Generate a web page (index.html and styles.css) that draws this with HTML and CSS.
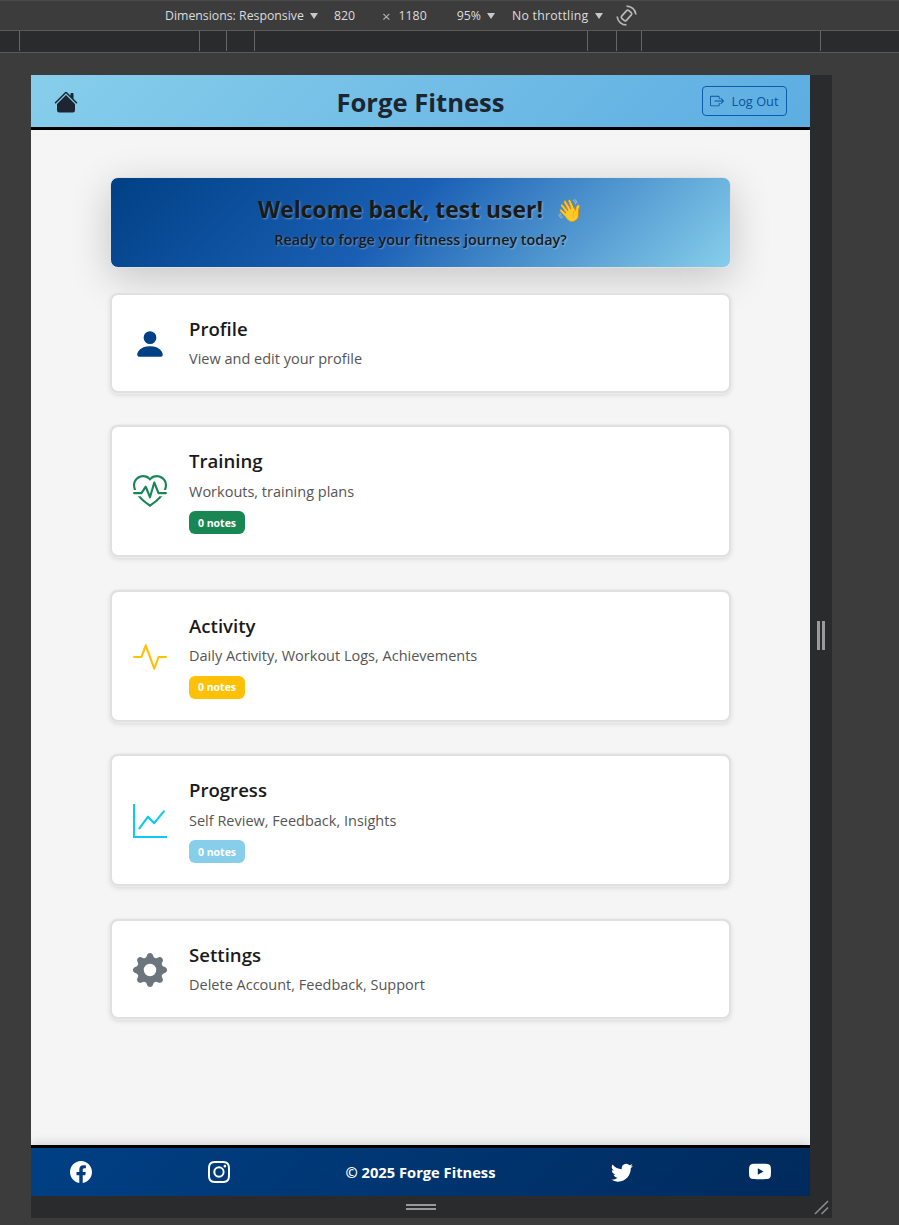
FILE: index.html
```html
<!DOCTYPE html>
<html lang="en">
<head>
<meta charset="utf-8">
<title>Forge Fitness</title>
<link rel="stylesheet" href="styles.css">
</head>
<body>
<div class="toolbar">
  <span class="tb-dim">Dimensions: Responsive</span><span class="caret"></span>
  <span class="tb-w">820</span><span class="tb-x">×</span><span class="tb-h">1180</span>
  <span class="tb-zoom">95%</span><span class="caret"></span>
  <span class="tb-thr">No throttling</span><span class="caret"></span>
  <svg class="tb-rot" viewBox="0 0 20 20" fill="none" stroke="#b8b8b8" stroke-width="1.6"><g transform="rotate(42 10 10)"><rect x="7" y="5" width="6" height="10" rx="1.5"/><path d="M4 3.3A9 9 0 0 1 16 3.3M16 16.7A9 9 0 0 1 4 16.7"/></g></svg>
</div>
<div class="ruler">
  <i class="r r1"></i><i class="r r2"></i><i class="r r3"></i><i class="r r4"></i><i class="r r5"></i><i class="r r6"></i><i class="r r7"></i><i class="r r8"></i>
</div>
<div class="device">
  <div class="viewport">
    <header class="head">
      <svg class="home" viewBox="0 0 16 16" fill="#1c2530"><path d="M8.707 1.5a1 1 0 0 0-1.414 0L.646 8.146a.5.5 0 0 0 .708.708L8 2.207l6.646 6.647a.5.5 0 0 0 .708-.708L13 5.793V2.5a.5.5 0 0 0-.5-.5h-1a.5.5 0 0 0-.5.5v1.293L8.707 1.5Z"/><path d="m8 3.293 6 6V13.5a1.5 1.5 0 0 1-1.5 1.5h-9A1.5 1.5 0 0 1 2 13.5V9.293l6-6Z"/></svg>
      <h1 class="brand">Forge Fitness</h1>
      <button class="logout"><svg class="logout-ic" viewBox="0 0 16 16" fill="currentColor"><path d="M10 12.5a.5.5 0 0 1-.5.5h-8a.5.5 0 0 1-.5-.5v-9a.5.5 0 0 1 .5-.5h8a.5.5 0 0 1 .5.5v2a.5.5 0 0 0 1 0v-2A1.5 1.5 0 0 0 9.5 2h-8A1.5 1.5 0 0 0 0 3.5v9A1.5 1.5 0 0 0 1.5 14h8a1.5 1.5 0 0 0 1.5-1.5v-2a.5.5 0 0 0-1 0v2z"/><path d="M15.854 8.354a.5.5 0 0 0 0-.708l-3-3a.5.5 0 0 0-.708.708L14.293 7.5H5.5a.5.5 0 0 0 0 1h8.793l-2.147 2.146a.5.5 0 0 0 .708.708l3-3z"/></svg>Log Out</button>
    </header>
    <main class="main">
      <section class="hero">
        <h2 class="hero-title">Welcome back, test user! <span class="wave">👋</span></h2>
        <p class="hero-sub">Ready to forge your fitness journey today?</p>
      </section>
      <div class="cards">
        <a class="card">
          <svg class="ic ic-profile" viewBox="0 0 16 16" fill="currentColor"><path d="M3 14s-1 0-1-1 1-4 6-4 6 3 6 4-1 1-1 1H3Zm5-6a3 3 0 1 0 0-6 3 3 0 0 0 0 6Z"/></svg>
          <div class="body"><h3 class="title">Profile</h3><p class="desc">View and edit your profile</p></div>
        </a>
        <a class="card">
          <svg class="ic ic-training" viewBox="0 0 16 16" fill="currentColor"><path d="m8 2.748-.717-.737C5.6.281 2.514.878 1.4 3.053.918 3.995.78 5.323 1.508 7H.43c-2.128-5.697 4.165-8.83 7.394-5.857.06.055.119.112.176.171a3.12 3.12 0 0 1 .176-.17c3.23-2.974 9.522.159 7.394 5.856h-1.078c.728-1.677.59-3.005.108-3.947C13.486.878 10.4.28 8.717 2.01L8 2.748ZM2.212 10h1.315C4.593 11.183 6.05 12.458 8 13.795c1.949-1.337 3.407-2.612 4.473-3.795h1.315c-1.265 1.566-3.14 3.25-5.788 5-2.648-1.75-4.523-3.434-5.788-5Z"/><path d="M10.464 3.314a.5.5 0 0 0-.945.049L7.921 8.956 6.464 5.314a.5.5 0 0 0-.88-.091L3.732 8H.5a.5.5 0 0 0 0 1H4a.5.5 0 0 0 .416-.223l1.473-2.209 1.647 4.118a.5.5 0 0 0 .945-.049l1.598-5.593 1.457 3.642A.5.5 0 0 0 12 9h3.5a.5.5 0 0 0 0-1h-3.162l-1.874-4.686Z"/></svg>
          <div class="body"><h3 class="title">Training</h3><p class="desc">Workouts, training plans</p><span class="badge b-green">0 notes</span></div>
        </a>
        <a class="card">
          <svg class="ic ic-activity" viewBox="0 0 16 16" fill="currentColor"><path d="M6 2a.5.5 0 0 1 .47.33L10 12.036l1.53-4.208A.5.5 0 0 1 12 7.5h3.5a.5.5 0 0 1 0 1h-3.15l-1.88 5.17a.5.5 0 0 1-.94 0L6 3.964 4.47 8.171A.5.5 0 0 1 4 8.5H.5a.5.5 0 0 1 0-1h3.15l1.88-5.17A.5.5 0 0 1 6 2Z"/></svg>
          <div class="body"><h3 class="title">Activity</h3><p class="desc">Daily Activity, Workout Logs, Achievements</p><span class="badge b-yellow">0 notes</span></div>
        </a>
        <a class="card">
          <svg class="ic ic-progress" viewBox="0 0 16 16" fill="currentColor"><path d="M0 0h1v15h15v1H0V0Zm14.817 3.113a.5.5 0 0 1 .07.704l-4.5 5.5a.5.5 0 0 1-.74.037L7.06 6.767l-3.656 5.027a.5.5 0 0 1-.808-.588l4-5.5a.5.5 0 0 1 .758-.06l2.609 2.61 4.15-5.073a.5.5 0 0 1 .704-.07Z"/></svg>
          <div class="body"><h3 class="title">Progress</h3><p class="desc">Self Review, Feedback, Insights</p><span class="badge b-sky">0 notes</span></div>
        </a>
        <a class="card">
          <svg class="ic ic-settings" viewBox="0 0 16 16" fill="currentColor"><path d="M9.405 1.05c-.413-1.4-2.397-1.4-2.81 0l-.1.34a1.464 1.464 0 0 1-2.105.872l-.31-.17c-1.283-.698-2.686.705-1.987 1.987l.169.311c.446.82.023 1.841-.872 2.105l-.34.1c-1.4.413-1.4 2.397 0 2.81l.34.1a1.464 1.464 0 0 1 .872 2.105l-.17.31c-.698 1.283.705 2.686 1.987 1.987l.311-.169a1.464 1.464 0 0 1 2.105.872l.1.34c.413 1.4 2.397 1.4 2.81 0l.1-.34a1.464 1.464 0 0 1 2.105-.872l.31.17c1.283.698 2.686-.705 1.987-1.987l-.169-.311a1.464 1.464 0 0 1 .872-2.105l.34-.1c1.4-.413 1.4-2.397 0-2.81l-.34-.1a1.464 1.464 0 0 1-.872-2.105l.17-.31c.698-1.283-.705-2.686-1.987-1.987l-.311.169a1.464 1.464 0 0 1-2.105-.872l-.1-.34zM8 10.93a2.929 2.929 0 1 1 0-5.86 2.929 2.929 0 0 1 0 5.858z"/></svg>
          <div class="body"><h3 class="title">Settings</h3><p class="desc">Delete Account, Feedback, Support</p></div>
        </a>
      </div>
    </main>
    <footer class="foot">
      <svg class="soc" viewBox="0 0 16 16" fill="currentColor"><path d="M16 8.049c0-4.446-3.582-8.05-8-8.05C3.58 0-.002 3.603-.002 8.05c0 4.017 2.926 7.347 6.75 7.951v-5.625h-2.03V8.05H6.75V6.275c0-2.017 1.195-3.131 3.022-3.131.876 0 1.791.157 1.791.157v1.98h-1.009c-.993 0-1.303.621-1.303 1.258v1.51h2.218l-.354 2.326H9.25V16c3.824-.604 6.75-3.934 6.75-7.951z"/></svg>
      <svg class="soc" viewBox="0 0 16 16" fill="currentColor"><path d="M8 0C5.829 0 5.556.01 4.703.048 3.85.088 3.269.222 2.76.42a3.917 3.917 0 0 0-1.417.923A3.927 3.927 0 0 0 .42 2.76C.222 3.268.087 3.85.048 4.7.01 5.555 0 5.827 0 8.001c0 2.172.01 2.444.048 3.297.04.852.174 1.433.372 1.942.205.526.478.972.923 1.417.444.445.89.719 1.416.923.51.198 1.09.333 1.942.372C5.555 15.99 5.827 16 8 16s2.444-.01 3.298-.048c.851-.04 1.434-.174 1.943-.372a3.916 3.916 0 0 0 1.416-.923c.445-.445.718-.891.923-1.417.197-.509.332-1.09.372-1.942C15.99 10.445 16 10.173 16 8s-.01-2.445-.048-3.299c-.04-.851-.175-1.433-.372-1.941a3.926 3.926 0 0 0-.923-1.417A3.911 3.911 0 0 0 13.24.42c-.51-.198-1.092-.333-1.943-.372C10.443.01 10.172 0 7.998 0h.003zm-.717 1.442h.718c2.136 0 2.389.007 3.232.046.78.035 1.204.166 1.486.275.373.145.64.319.92.599.28.28.453.546.598.92.11.281.24.705.275 1.485.039.843.047 1.096.047 3.231s-.008 2.389-.047 3.232c-.035.78-.166 1.203-.275 1.485a2.47 2.47 0 0 1-.599.919c-.28.28-.546.453-.92.598-.28.11-.704.24-1.485.276-.843.038-1.096.047-3.232.047s-2.39-.009-3.233-.047c-.78-.036-1.203-.166-1.485-.276a2.478 2.478 0 0 1-.92-.598 2.48 2.48 0 0 1-.6-.92c-.109-.281-.24-.705-.275-1.485-.038-.843-.046-1.096-.046-3.233 0-2.136.008-2.388.046-3.231.036-.78.166-1.204.276-1.486.145-.373.319-.64.599-.92.28-.28.546-.453.92-.598.282-.11.705-.24 1.485-.276.738-.034 1.024-.044 2.515-.045v.002zm4.988 1.328a.96.96 0 1 0 0 1.92.96.96 0 0 0 0-1.92zm-4.27 1.122a4.109 4.109 0 1 0 0 8.217 4.109 4.109 0 0 0 0-8.217zm0 1.441a2.667 2.667 0 1 1 0 5.334 2.667 2.667 0 0 1 0-5.334z"/></svg>
      <span class="copy">© 2025 Forge Fitness</span>
      <svg class="soc" viewBox="0 0 16 16" fill="currentColor"><path d="M5.026 15c6.038 0 9.341-5.003 9.341-9.334 0-.14 0-.282-.006-.422A6.685 6.685 0 0 0 16 3.542a6.658 6.658 0 0 1-1.889.518 3.301 3.301 0 0 0 1.447-1.817 6.533 6.533 0 0 1-2.087.793A3.286 3.286 0 0 0 7.875 6.03a9.325 9.325 0 0 1-6.767-3.429 3.289 3.289 0 0 0 1.018 4.382A3.323 3.323 0 0 1 .64 6.575v.045a3.288 3.288 0 0 0 2.632 3.218 3.203 3.203 0 0 1-.865.115 3.23 3.23 0 0 1-.614-.057 3.283 3.283 0 0 0 3.067 2.277A6.588 6.588 0 0 1 .78 13.58a6.32 6.32 0 0 1-.78-.045A9.344 9.344 0 0 0 5.026 15z"/></svg>
      <svg class="soc" viewBox="0 0 16 16" fill="currentColor"><path d="M8.051 1.999h.089c.822.003 4.987.033 6.11.335a2.01 2.01 0 0 1 1.415 1.42c.101.38.172.883.22 1.402l.01.104.022.26.008.104c.065.914.073 1.77.074 1.957v.075c-.001.194-.01 1.108-.082 2.06l-.008.105-.009.104c-.05.572-.124 1.14-.235 1.558a2.007 2.007 0 0 1-1.415 1.42c-1.16.312-5.569.334-6.18.335h-.142c-.309 0-1.587-.006-2.927-.052l-.17-.006-.087-.004-.171-.007-.171-.007c-1.11-.049-2.167-.128-2.654-.26a2.007 2.007 0 0 1-1.415-1.419c-.111-.417-.185-.986-.235-1.558L.09 9.82l-.008-.104A31.4 31.4 0 0 1 0 7.68v-.123c.002-.215.01-.958.064-1.778l.007-.103.003-.052.008-.104.022-.26.01-.104c.048-.519.119-1.023.22-1.402a2.007 2.007 0 0 1 1.415-1.42c.487-.13 1.544-.21 2.654-.26l.17-.007.172-.006.086-.003.171-.007A99.788 99.788 0 0 1 7.858 2h.193zM6.4 5.209v4.818l4.157-2.408L6.4 5.209z"/></svg>
    </footer>
  </div>
  <div class="handle-right"><i></i><i></i></div>
  <div class="handle-bottom"><i></i><i></i></div>
  <div class="handle-corner"><svg viewBox="0 0 16 16" stroke="#8f8f8f" stroke-width="1.6"><path d="M1 15 15 1M8 15l7-7"/></svg></div>
</div>
</body>
</html>
```

FILE: styles.css
```css
* { box-sizing: border-box; }
html, body { margin: 0; padding: 0; }
body {
  width: 899px;
  height: 1225px;
  overflow: hidden;
  background: #3c3c3c;
  font-family: "Open Sans", "Noto Sans", sans-serif;
}

/* devtools chrome */
.toolbar {
  height: 30px;
  padding: 0 0 0 165px;
  display: flex;
  align-items: center;
  color: #dcdcdc;
  font-size: 12.3px;
  border-top: 1px solid #4a4a4a;
}
.caret {
  width: 0;
  height: 0;
  margin-left: 6px;
  border-left: 4px solid transparent;
  border-right: 4px solid transparent;
  border-top: 6px solid #c8c8c8;
}
.tb-w { margin-left: 16px; }
.tb-x { margin-left: 27px; color: #b8b8b8; font-size: 15px; }
.tb-h { margin-left: 8px; }
.tb-zoom { margin-left: 30px; }
.tb-thr { margin-left: 17px; letter-spacing: 0.25px; }
.tb-rot { width: 21px; height: 21px; margin-left: 13px; }

.ruler {
  height: 23px;
  background: #2a2b2c;
  border-top: 1px solid #5a5a5a;
  border-bottom: 1px solid #5a5a5a;
  position: relative;
}
.r { position: absolute; top: 0; bottom: 1px; width: 1px; background: #666; }
.r1 { left: 19px; } .r2 { left: 199px; } .r3 { left: 226px; } .r4 { left: 254px; }
.r5 { left: 587px; } .r6 { left: 616px; } .r7 { left: 641px; } .r8 { left: 820px; }

.device {
  margin: 22px 0 0 31px;
  width: 801px;
  display: grid;
  grid-template-columns: 779px 22px;
  grid-template-rows: 1121px 22px;
  background: #2a2b2c;
}
.viewport {
  display: flex;
  flex-direction: column;
  background: #f5f5f5;
  min-height: 0;
  overflow: hidden;
}
.handle-right {
  display: flex;
  gap: 2px;
  align-items: center;
  justify-content: center;
}
.handle-right i { width: 3px; height: 29px; background: #9a9a9a; }
.handle-bottom {
  display: flex;
  flex-direction: column;
  gap: 2px;
  align-items: center;
  justify-content: center;
}
.handle-bottom i { width: 30px; height: 2px; background: #9a9a9a; }
.handle-corner { display: flex; align-items: center; justify-content: center; }
.handle-corner svg { width: 15px; height: 15px; }

/* app header */
.head {
  height: 55px;
  flex: none;
  padding: 0 23px;
  display: grid;
  grid-template-columns: 1fr auto 1fr;
  align-items: center;
  background: linear-gradient(135deg, #87ceeb, #5dade2);
  border-bottom: 3px solid #000;
}
.home { width: 24px; height: 24px; margin-top: 2px; }
.brand {
  margin: 4px 0 0;
  font-size: 25.6px;
  font-weight: 700;
  line-height: 34px;
  color: #1c2530;
}
.logout {
  justify-self: end;
  width: 85px;
  height: 30px;
  padding: 0;
  display: flex;
  align-items: center;
  justify-content: center;
  gap: 7px;
  background: transparent;
  border: 1px solid #0b5cad;
  border-radius: 4px;
  color: #0b52a0;
  font-family: inherit;
  font-size: 12.8px;
}
.logout-ic { width: 14px; height: 14px; }

/* main */
.main {
  flex: 1;
  min-height: 0;
  padding: 47px 79px 0;
}
.hero {
  height: 91px;
  padding-top: 15px;
  text-align: center;
  border: 1px solid #e0e0e0;
  border-radius: 8px;
  background: linear-gradient(135deg, #004085 0%, #1a5fb4 46%, #87ceeb 100%);
  box-shadow: 0 10px 40px rgba(0, 0, 0, 0.2);
  color: #1a1a1a;
  text-shadow: 1px 1px 2px rgba(255, 255, 255, 0.35);
}
.hero-title {
  margin: 0;
  font-size: 22.9px;
  font-weight: 700;
  line-height: 32px;
}
.wave { margin-left: 7px; font-size: 22px; text-shadow: none; }
.hero-sub {
  margin: 4px 0 0;
  font-size: 14.35px;
  font-weight: 550;
  line-height: 20px;
}
.cards {
  margin-top: 25px;
  display: flex;
  flex-direction: column;
  gap: 32.4px;
}
.card {
  display: flex;
  align-items: center;
  gap: 22px;
  padding: 22px 21px;
  background: #fff;
  border: 2px solid #e0e0e0;
  border-radius: 8px;
  box-shadow: 0 0 0 1px #ececec, 0 2px 5px rgba(0, 0, 0, 0.12);
}
.ic { width: 34px; height: 34px; flex: none; margin-top: 2px; }
.ic-profile { color: #004085; }
.ic-training { color: #198754; }
.ic-activity { color: #ffc107; }
.ic-progress { color: #0dcaf0; }
.ic-settings { color: #6c757d; }
.body { display: flex; flex-direction: column; align-items: flex-start; }
.title {
  margin: 0;
  font-size: 18.6px;
  font-weight: 600;
  line-height: 24px;
  color: #1a1a1a;
}
.desc {
  margin: 8.4px 0 -0.4px;
  font-size: 14.5px;
  line-height: 20px;
  color: #555;
}
.badge {
  margin: 10px 0 -1px;
  width: 56px;
  height: 23px;
  display: flex;
  align-items: center;
  justify-content: center;
  border-radius: 6px;
  color: #fff;
  font-size: 10.5px;
  font-weight: 700;
}
.b-green { background: #198754; }
.b-yellow { background: #ffc107; }
.b-sky { background: #87ceeb; }

/* footer */
.foot {
  height: 51px;
  flex: none;
  margin-top: auto;
  padding: 0 39px;
  display: flex;
  align-items: center;
  justify-content: space-between;
  color: #fff;
  background: linear-gradient(135deg, #004085, #002a5c);
  border-top: 3px solid #000;
  box-shadow: 0 -2px 10px rgba(0, 0, 0, 0.15);
}
.soc { width: 22px; height: 22px; }
.copy { font-size: 14.7px; font-weight: 700; }
```
